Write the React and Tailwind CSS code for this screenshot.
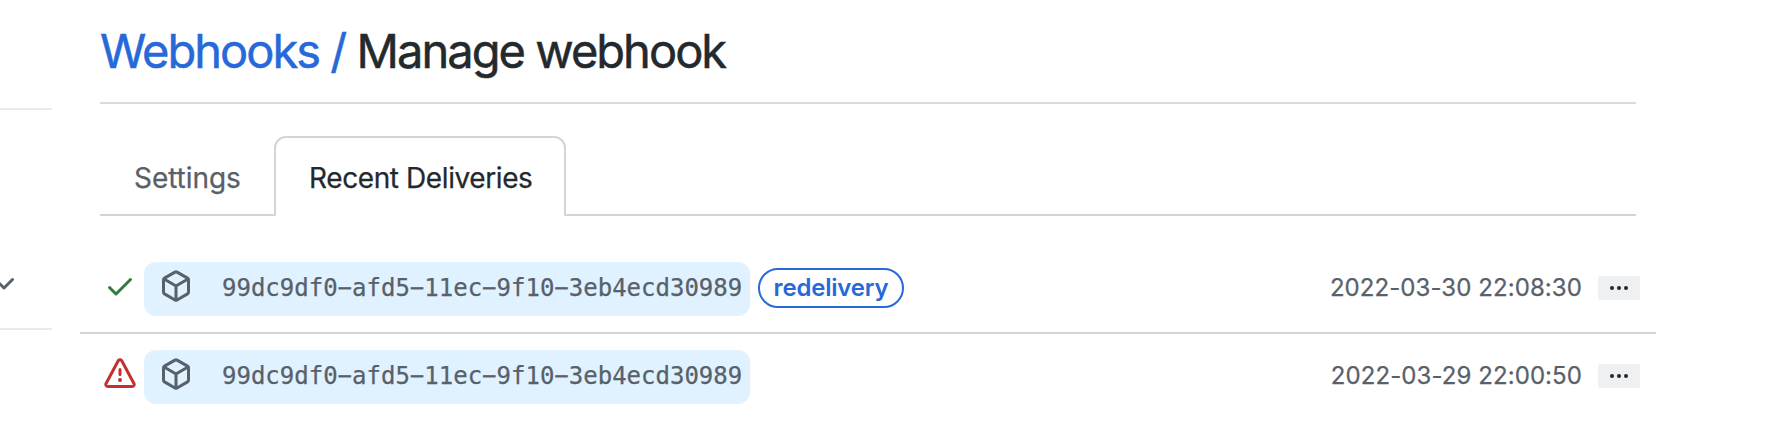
const PATHS = {
  check:
    "M13.78 4.22a.75.75 0 010 1.06l-7.25 7.25a.75.75 0 01-1.06 0L2.22 9.28a.75.75 0 011.06-1.06L6 10.94l6.72-6.72a.75.75 0 011.06 0z",
  alert:
    "M8.22 1.754a.25.25 0 00-.44 0L1.698 13.132a.25.25 0 00.22.368h12.164a.25.25 0 00.22-.368L8.22 1.754zm-1.763-.707c.659-1.234 2.427-1.234 3.086 0l6.082 11.378A1.75 1.75 0 0114.082 15H1.918a1.75 1.75 0 01-1.543-2.575L6.457 1.047zM9 11a1 1 0 11-2 0 1 1 0 012 0zm-.25-5.25a.75.75 0 00-1.5 0v2.5a.75.75 0 001.5 0v-2.5z",
  box:
    "M8.878.392a1.75 1.75 0 00-1.756 0l-5.25 3.045A1.75 1.75 0 001 4.951v6.098c0 .624.332 1.2.872 1.514l5.25 3.045a1.75 1.75 0 001.756 0l5.25-3.045c.54-.313.872-.89.872-1.514V4.951c0-.624-.332-1.2-.872-1.514L8.878.392zM7.875 1.69a.25.25 0 01.25 0l4.63 2.685L8 7.133 3.245 4.375l4.63-2.685zM2.5 5.677v5.372c0 .09.047.171.125.216l4.625 2.683V8.432L2.5 5.677zm6.25 8.271l4.625-2.683a.25.25 0 00.125-.216V5.677L8.75 8.432v5.516z",
  chevron:
    "M12.78 6.22a.75.75 0 010 1.06l-4.25 4.25a.75.75 0 01-1.06 0L3.22 7.28a.75.75 0 011.06-1.06L8 9.94l3.72-3.72a.75.75 0 011.06 0z",
};

function Icon({ name, className = "" }) {
  return (
    <svg viewBox="0 0 16 16" fill="currentColor" fillRule="evenodd" className={`size-8 shrink-0 ${className}`}>
      <path d={PATHS[name]} />
    </svg>
  );
}

const deliveries = [
  { status: "check", color: "text-[#2f7d38]", id: "99dc9df0−afd5−11ec−9f10−3eb4ecd30989", redelivery: true, time: "2022-03-30 22:08:30" },
  { status: "alert", color: "text-[#c3302f]", id: "99dc9df0−afd5−11ec−9f10−3eb4ecd30989", redelivery: false, time: "2022-03-29 22:00:50" },
];

function Delivery({ status, color, id, redelivery, time }) {
  return (
    <li className="flex h-[88px] items-start border-b-2 border-[#d1d5da] pt-4 pr-4 pl-6 last:border-b-0">
      <Icon name={status} className={`mt-2 ${color}`} />
      <a className="ml-2 flex h-[54px] w-[606px] items-start rounded-xl bg-[#e0f2ff] pt-2 pl-4 text-[#586069]">
        <Icon name="box" />
        <code className="ml-[30px] font-['DejaVu_Sans_Mono',monospace] text-[24px] leading-9 whitespace-nowrap [-webkit-text-stroke:0.25px]">{id}</code>
      </a>
      {redelivery && (
        <span className="mt-1.5 ml-2 flex h-10 w-[146px] items-center justify-center rounded-full border-2 border-[#2769d8] text-[24px] font-semibold tracking-[-0.2px] text-[#2769d8]">
          redelivery
        </span>
      )}
      <time className="mt-2 ml-auto text-[24px] leading-9 tracking-[0.08px] whitespace-nowrap text-[#586069] [-webkit-text-stroke:0.25px]">{time}</time>
      <button className="mt-3.5 ml-4 flex h-6 w-[42px] items-center justify-center rounded-[2px] bg-[#eff0f2] text-[#24292e]">
        <svg viewBox="0 0 18 4" fill="currentColor" className="h-1 w-[18px]">
          <circle cx="2" cy="2" r="2" />
          <circle cx="9" cy="2" r="2" />
          <circle cx="16" cy="2" r="2" />
        </svg>
      </button>
    </li>
  );
}

export default function App() {
  return (
    <div className="flex h-[448px] w-full overflow-hidden bg-white font-['Inter',sans-serif] text-[#24292e]">
      <aside className="w-[52px] shrink-0 pt-[108px]">
        <div className="flex h-[222px] items-end border-y-2 border-[#e7ebf0] pb-[30px]">
          <Icon name="chevron" className="-ml-3 text-[#586069]" />
        </div>
      </aside>
      <main className="ml-7 w-[1576px] shrink-0">
        <header className="mx-5 h-[104px] border-b-2 border-[#d8dce0] pt-[21px]">
          <h1 className="text-[47px] leading-[60px] font-normal tracking-[-1.97px] whitespace-nowrap [-webkit-text-stroke:0.5px]">
            <a className="text-[#2769d8]">Webhooks /</a> Manage webhook
          </h1>
        </header>
        <nav className="mx-5 mt-8 flex h-20 text-[28px] leading-[42px] [-webkit-text-stroke:0.25px]">
          <a className="w-[174px] border-b-2 border-[#d1d5da] pt-[21px] pl-[34px] tracking-[-0.05px] text-[#586069]">Settings</a>
          <a className="w-[292px] rounded-t-xl border-2 border-b-0 border-[#d1d5da] pt-[19px] pl-[33px] tracking-[-0.4px] whitespace-nowrap">Recent Deliveries</a>
          <span className="grow border-b-2 border-[#d1d5da]" />
        </nav>
        <ul className="mt-[30px]">
          {deliveries.map((d) => (
            <Delivery key={d.time} {...d} />
          ))}
        </ul>
      </main>
    </div>
  );
}
